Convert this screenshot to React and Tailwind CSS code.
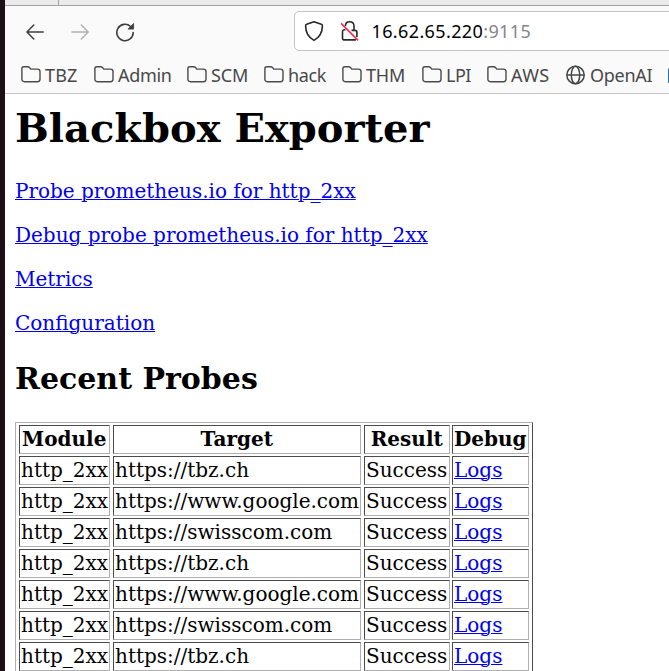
const serif = "font-['DejaVu_Serif',serif]";

function Folder() {
  return (
    <svg className="h-5 w-5 shrink-0" viewBox="0 0 20 20" fill="none" stroke="#4a4a4c" strokeWidth="1.4">
      <path d="M.9 3.6C.9 2.2 1.6 1.7 3 1.7h3.6c1 0 1.5.4 2.1 1.1l1.1 1.3h6.6c1.700 0 2.600.9 2.600 2.500v7.700c0 1.600-.9 2.400-2.500 2.400h-13C1.800 16.700.9 15.900.9 14.300z" />
    </svg>
  );
}

function Globe() {
  return (
    <svg className="h-5 w-5 shrink-0" viewBox="0 0 20 20" fill="none" stroke="#464648" strokeWidth="1.5">
      <circle cx="9.5" cy="10" r="8.7" />
      <ellipse cx="9.5" cy="10" rx="4.2" ry="8.7" />
      <path d="M.8 10h17.4" />
    </svg>
  );
}

const bookmarks = [
  { label: "TBZ", box: "w-[73px]", text: "tracking-[0.2px]" },
  { label: "Admin", box: "w-[93px]", text: "tracking-[-0.3px]" },
  { label: "SCM", box: "w-[77px]", text: "tracking-[-0.1px]" },
  { label: "hack", box: "w-[78px]", text: "tracking-[-0.4px]" },
  { label: "THM", box: "w-[80px]", text: "tracking-[-0.2px]" },
  { label: "LPI", box: "w-[65px]", text: "tracking-[-0.5px]" },
  { label: "AWS", box: "w-[79px]", text: "tracking-[0.4px]" },
  { label: "OpenAI", box: "w-[102px]", text: "tracking-[-0.3px]", globe: true },
];

const links = [
  "Probe prometheus.io for http_2xx",
  "Debug probe prometheus.io for http_2xx",
  "Metrics",
  "Configuration",
];

const targets = [
  "https://tbz.ch",
  "https://www.google.com",
  "https://swisscom.com",
  "https://tbz.ch",
  "https://www.google.com",
  "https://swisscom.com",
  "https://tbz.ch",
];

const cell =
  "h-[29px] shrink-0 whitespace-nowrap border border-t-[#4b4b4b] border-l-[#4b4b4b] border-r-[#b0b0b0] border-b-[#b0b0b0] leading-[27px]";

function Row({ items, head }) {
  const tone = head ? "flex justify-center font-bold pr-[0.5px]" : "pl-px";
  return (
    <div className="mb-[2px] flex">
      <div className={`${cell} ${tone} mr-[3px] w-[91px]`}>{items[0]}</div>
      <div className={`${cell} ${tone} mr-[3px] w-[248px]`}>{items[1]}</div>
      <div className={`${cell} ${tone} mr-[2px] w-[86px]`}>{items[2]}</div>
      <div className={`${cell} ${tone} w-[77px]`}>
        {head ? items[3] : <a className="text-[#0000ee] underline decoration-1 underline-offset-1">{items[3]}</a>}
      </div>
    </div>
  );
}

export default function App() {
  return (
    <div className="flex h-[671px] w-[669px] overflow-hidden bg-white text-black">
      <div className="w-[5px] shrink-0 bg-[#1c0f17]" />
      <div className="flex w-[664px] shrink-0 flex-col overflow-hidden">
        <div className="flex h-[6px] shrink-0 border-b border-[#a3a3a3] bg-[#eaeaea]">
          <div className="w-[54px] border-r border-[#a3a3a3]" />
        </div>

        <header className="flex h-[88px] shrink-0 flex-col border-b border-[#c4c4c4] bg-[#fafafa] font-['Noto_Sans',sans-serif] text-[18px]">
          <div className="flex h-[50px] shrink-0 items-center">
            <svg className="ml-5 mt-px h-5 w-5 shrink-0" viewBox="0 0 20 20" fill="none" stroke="#3d3d3f" strokeWidth="1.5" strokeLinecap="round" strokeLinejoin="round">
              <path d="M18.200 10H1.900M8.800 3 1.900 10l6.900 7" />
            </svg>
            <svg className="ml-[25px] mt-px h-5 w-5 shrink-0" viewBox="0 0 20 20" fill="none" stroke="#b3b3b3" strokeWidth="1.5" strokeLinecap="round" strokeLinejoin="round">
              <path d="M1.900 10h16.300M11.300 3l6.900 7-6.900 7" />
            </svg>
            <svg className="ml-[25px] mt-px h-5 w-5 shrink-0" viewBox="0 0 20 20" fill="none" stroke="#3d3d3f" strokeWidth="1.6" strokeLinecap="round">
              <path d="M18.2 10.5A8.2 8.2 0 1 1 15.6 4.5" />
              <path d="M18.6 1.8v5.3h-5.3z" fill="#3d3d3f" stroke="#3d3d3f" strokeWidth=".8" strokeLinejoin="round" />
            </svg>
            <div className="ml-[159px] flex h-10 w-[400px] shrink-0 items-center rounded-l-[5px] border border-[#c3c3c6] bg-white pl-[9px]">
              <svg className="h-[22px] w-5 shrink-0" viewBox="0 0 20 22" fill="none" stroke="#29292b" strokeWidth="1.6" strokeLinejoin="round">
                <path d="M10 1.8 17.4 4.3c.7.2 1 .7 1 1.4 0 7.8-2.8 11.6-8.4 14.7C4.4 17.3 1.6 13.500 1.600 5.700c0-.7.3-1.200 1-1.400z" />
              </svg>
              <svg className="ml-4 h-[22px] w-5 shrink-0" viewBox="0 0 20 22" fill="none" stroke="#29292b" strokeWidth="1.6" strokeLinecap="butt">
                <path d="M5.400 6.100C5.400 3.600 7 1.700 9.600 1.700S14 3.500 14 6.200v4.300M5.400 9.700h-.9c-1.300 0-2 .7-2 2v6.200c0 1.300.7 2 2 2h11.400M11.500 10.400h3.400c1.300 0 2 .7 2 2v4.600" />
                <path d="M1.100 3.400 18.100 20.300" stroke="#f02f56" strokeWidth="1.7" />
              </svg>
              <div className="ml-[11.5px] whitespace-nowrap tracking-[0.38px]">
                16.62.65.220<span className="text-[#85858a]">:9115</span>
              </div>
            </div>
          </div>
          <nav className="flex h-[37px] shrink-0 items-center pl-4 pt-px text-[#48484a]">
            {bookmarks.map((b) => (
              <div key={b.label} className={`flex h-5 shrink-0 items-center whitespace-nowrap ${b.box}`}>
                {b.globe ? <Globe /> : <Folder />}
                <span className={`ml-1 ${b.text}`}>{b.label}</span>
              </div>
            ))}
            <div className="mt-px h-[15px] w-[10px] shrink-0 border-t border-[#8ebbe0] bg-[#2672ad]" />
          </nav>
        </header>

        <main className={`flex shrink-0 flex-col items-start pl-[10px] text-[20px] ${serif}`}>
          <h1 className="mt-[10px] h-[47px] whitespace-nowrap text-[40px] font-bold leading-[47px]">Blackbox Exporter</h1>
          <div className="mt-[28px] flex flex-col gap-5">
            {links.map((l) => (
              <a key={l} className="h-6 whitespace-nowrap leading-6 text-[#0000ee] underline decoration-1 underline-offset-1">
                {l}
              </a>
            ))}
          </div>
          <h2 className="mt-[26px] h-9 whitespace-nowrap text-[30px] font-bold leading-9">Recent Probes</h2>
          <div className="mt-[25px] w-[518px] border border-b-0 border-t-[#b0b0b0] border-l-[#b0b0b0] border-r-[#4b4b4b] pl-[3px] pt-[2px]">
            <Row head items={["Module", "Target", "Result", "Debug"]} />
            {targets.map((t, i) => (
              <Row key={i} items={["http_2xx", t, "Success", "Logs"]} />
            ))}
          </div>
        </main>
      </div>
    </div>
  );
}
